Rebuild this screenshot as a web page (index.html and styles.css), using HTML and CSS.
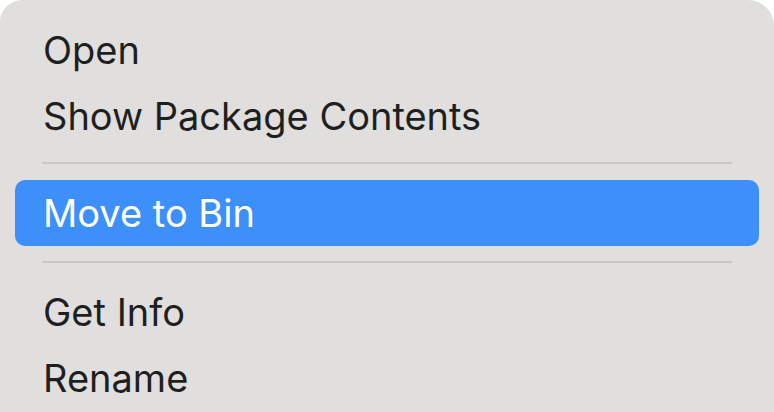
FILE: index.html
```html
<!DOCTYPE html>
<html>
<head>
<meta charset="utf-8">
<link rel="stylesheet" href="styles.css">
</head>
<body>
<div class="menu">
  <div class="item">Open</div>
  <div class="item">Show Package Contents</div>
  <div class="sep sep-a"></div>
  <div class="item active">Move to Bin</div>
  <div class="sep sep-b"></div>
  <div class="item">Get Info</div>
  <div class="item">Rename</div>
</div>
</body>
</html>
```
FILE: styles.css
```css
html, body {
  margin: 0;
  padding: 0;
  background: #ffffff;
}
body {
  width: 774px;
  height: 412px;
  overflow: hidden;
}
.menu {
  box-sizing: border-box;
  width: 774px;
  height: 430px;
  background: #e0dfde;
  border-radius: 22px 26px 0 0;
  padding: 17px 15px 0 15px;
  display: flex;
  flex-direction: column;
  font-family: "Inter", "Liberation Sans", sans-serif;
}
.item {
  height: 66px;
  display: flex;
  align-items: center;
  padding-left: 28px;
  font-size: 38px;
  color: #1f1f1f;
  border-radius: 10px;
}
.item.active {
  background: #3d90f9;
  color: #ffffff;
}
.sep {
  height: 2px;
  background: #c9c8c7;
  margin: 0 27px;
}
.sep-a {
  margin-top: 13px;
  margin-bottom: 16px;
}
.sep-b {
  margin-top: 15px;
  margin-bottom: 16px;
}
```
